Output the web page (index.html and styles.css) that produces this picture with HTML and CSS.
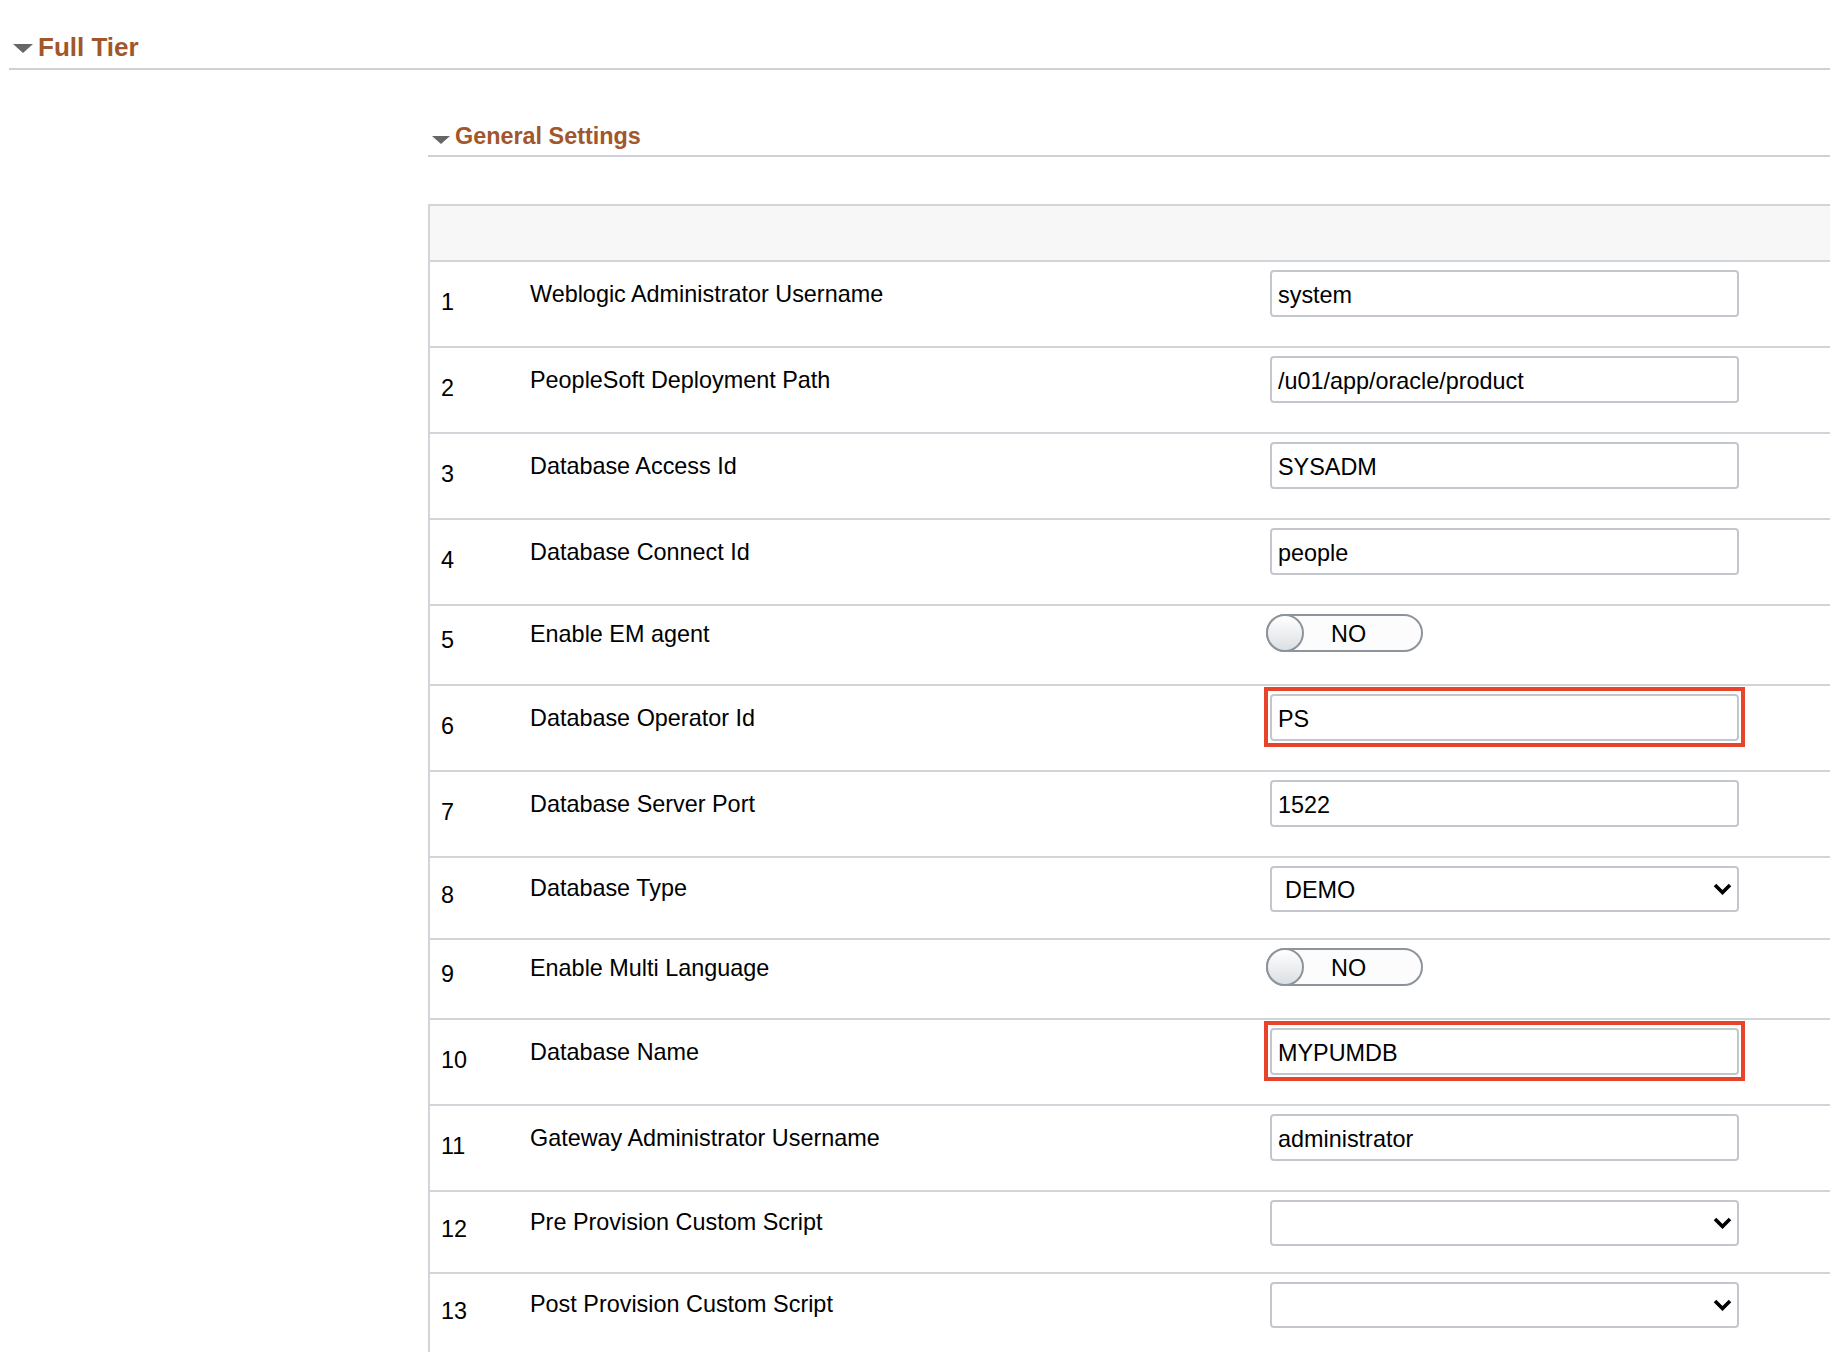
FILE: index.html
```html
<!DOCTYPE html>
<html lang="en">
<head>
<meta charset="utf-8">
<title>Full Tier</title>
<link rel="stylesheet" href="styles.css">
</head>
<body>
<div class="page">
  <section class="group">
    <div class="group-head">
      <span class="caret"></span><span class="group-title">Full Tier</span>
    </div>
    <div class="group-body">
      <div class="sub-head">
        <span class="caret caret--sm"></span><span class="sub-title">General Settings</span>
      </div>
      <div class="grid">
        <div class="grid-header"></div>

        <div class="row row--text">
          <div class="num">1</div>
          <div class="label">Weblogic Administrator Username</div>
          <div class="ctrl"><input class="input" type="text" value="system" readonly></div>
        </div>
        <div class="row row--text">
          <div class="num">2</div>
          <div class="label">PeopleSoft Deployment Path</div>
          <div class="ctrl"><input class="input" type="text" value="/u01/app/oracle/product" readonly></div>
        </div>
        <div class="row row--text">
          <div class="num">3</div>
          <div class="label">Database Access Id</div>
          <div class="ctrl"><input class="input" type="text" value="SYSADM" readonly></div>
        </div>
        <div class="row row--text">
          <div class="num">4</div>
          <div class="label">Database Connect Id</div>
          <div class="ctrl"><input class="input" type="text" value="people" readonly></div>
        </div>
        <div class="row row--toggle">
          <div class="num">5</div>
          <div class="label">Enable EM agent</div>
          <div class="ctrl"><div class="toggle"><span class="knob"></span><span class="toggle-text">NO</span></div></div>
        </div>
        <div class="row row--text">
          <div class="num">6</div>
          <div class="label">Database Operator Id</div>
          <div class="ctrl"><div class="flag"><input class="input" type="text" value="PS" readonly></div></div>
        </div>
        <div class="row row--text">
          <div class="num">7</div>
          <div class="label">Database Server Port</div>
          <div class="ctrl"><input class="input" type="text" value="1522" readonly></div>
        </div>
        <div class="row row--select">
          <div class="num">8</div>
          <div class="label">Database Type</div>
          <div class="ctrl"><div class="select"><span class="select-value">DEMO</span><svg class="chev" width="19" height="12" viewBox="0 0 19 12"><polyline points="2,2 9.5,9.5 17,2" fill="none" stroke="#000" stroke-width="3.6"/></svg></div></div>
        </div>
        <div class="row row--toggle">
          <div class="num">9</div>
          <div class="label">Enable Multi Language</div>
          <div class="ctrl"><div class="toggle"><span class="knob"></span><span class="toggle-text">NO</span></div></div>
        </div>
        <div class="row row--text">
          <div class="num">10</div>
          <div class="label">Database Name</div>
          <div class="ctrl"><div class="flag"><input class="input" type="text" value="MYPUMDB" readonly></div></div>
        </div>
        <div class="row row--text">
          <div class="num">11</div>
          <div class="label">Gateway Administrator Username</div>
          <div class="ctrl"><input class="input" type="text" value="administrator" readonly></div>
        </div>
        <div class="row row--select">
          <div class="num">12</div>
          <div class="label">Pre Provision Custom Script</div>
          <div class="ctrl"><div class="select"><span class="select-value"></span><svg class="chev" width="19" height="12" viewBox="0 0 19 12"><polyline points="2,2 9.5,9.5 17,2" fill="none" stroke="#000" stroke-width="3.6"/></svg></div></div>
        </div>
        <div class="row row--select">
          <div class="num">13</div>
          <div class="label">Post Provision Custom Script</div>
          <div class="ctrl"><div class="select"><span class="select-value"></span><svg class="chev" width="19" height="12" viewBox="0 0 19 12"><polyline points="2,2 9.5,9.5 17,2" fill="none" stroke="#000" stroke-width="3.6"/></svg></div></div>
        </div>
      </div>
    </div>
  </section>
</div>
</body>
</html>
```

FILE: styles.css
```css
html, body {
  margin: 0;
  padding: 0;
  background: #ffffff;
}

body {
  font-family: "Liberation Sans", Arial, Helvetica, sans-serif;
  color: #000;
  overflow: hidden;
}

.page {
  padding: 32px 0 0 9px;
}

.group-head {
  display: flex;
  align-items: flex-start;
  padding: 0 0 6px 4px;
  border-bottom: 2px solid #cdd1d6;
}

.caret {
  width: 0;
  height: 0;
  border-left: 10px solid transparent;
  border-right: 10px solid transparent;
  border-top: 9px solid #666666;
  margin-top: 12px;
  margin-right: 5px;
  flex: none;
}

.caret--sm {
  border-left-width: 9.5px;
  border-right-width: 9.5px;
  border-top-width: 8px;
  margin-top: 13px;
  margin-right: 5px;
}

.group-title {
  font-size: 26px;
  line-height: 30px;
  font-weight: bold;
  color: #a1562b;
}

.group-body {
  margin-left: 419px;
  padding-top: 53px;
}

.sub-head {
  display: flex;
  align-items: flex-start;
  padding: 0 0 6px 4px;
  border-bottom: 2px solid #cdd1d6;
}

.sub-title {
  font-size: 23.4px;
  line-height: 26px;
  font-weight: bold;
  color: #a1562b;
}

.grid {
  margin-top: 47px;
  border-left: 2px solid #d1d4d8;
}

.grid-header {
  height: 54px;
  background: #f7f7f7;
  border-top: 2px solid #d1d4d8;
  border-bottom: 2px solid #d1d4d8;
}

.row {
  display: grid;
  grid-template-columns: 100px 740px 469px 1fr;
  align-items: start;
  box-sizing: border-box;
  border-bottom: 2px solid #d1d4d8;
  font-size: 23.4px;
  line-height: 26px;
}

.row--text { height: 86px; }
.row--toggle { height: 80px; }
.row--select { height: 82px; }

.num {
  padding-left: 11px;
  padding-top: 27px;
}

.label {
  padding-top: 19px;
}

.row--toggle .num { padding-top: 21px; }
.row--toggle .label { padding-top: 15px; }
.row--select .num { padding-top: 24px; }
.row--select .label { padding-top: 17px; }

.ctrl {
  padding-top: 8px;
}

.input {
  display: block;
  box-sizing: border-box;
  width: 469px;
  height: 47px;
  margin: 0;
  padding: 4px 6px 0;
  border: 2px solid #c3c7cd;
  border-radius: 4px;
  background: #fff;
  font-family: "Liberation Sans", Arial, Helvetica, sans-serif;
  font-size: 23.4px;
  color: #000;
  outline: none;
}

.flag {
  width: fit-content;
  margin: -7px -6px -6px -6px;
  padding: 3px 2px 2px 2px;
  border: 4px solid #e8432b;
}

.select {
  display: flex;
  align-items: center;
  box-sizing: border-box;
  width: 469px;
  height: 46px;
  padding: 2px 5px 0 13px;
  border: 2px solid #c3c7cd;
  border-radius: 4px;
  background: #fff;
}

.select-value {
  flex: 1;
  font-size: 23.4px;
}

.chev {
  flex: none;
  display: block;
  margin-top: -2px;
}

.toggle {
  display: flex;
  align-items: center;
  box-sizing: border-box;
  width: 157px;
  height: 38px;
  margin-left: -4px;
  border: 2px solid #8e949b;
  border-radius: 19px;
  background: #fcfcfc;
}

.knob {
  flex: none;
  box-sizing: border-box;
  width: 38px;
  height: 38px;
  margin: -2px;
  border: 2px solid #8e949b;
  border-radius: 50%;
  background: linear-gradient(#ffffff, #dcdfe3);
}

.toggle-text {
  margin-left: 29px;
  font-size: 23.4px;
  line-height: 26px;
  padding-top: 1px;
}
```
